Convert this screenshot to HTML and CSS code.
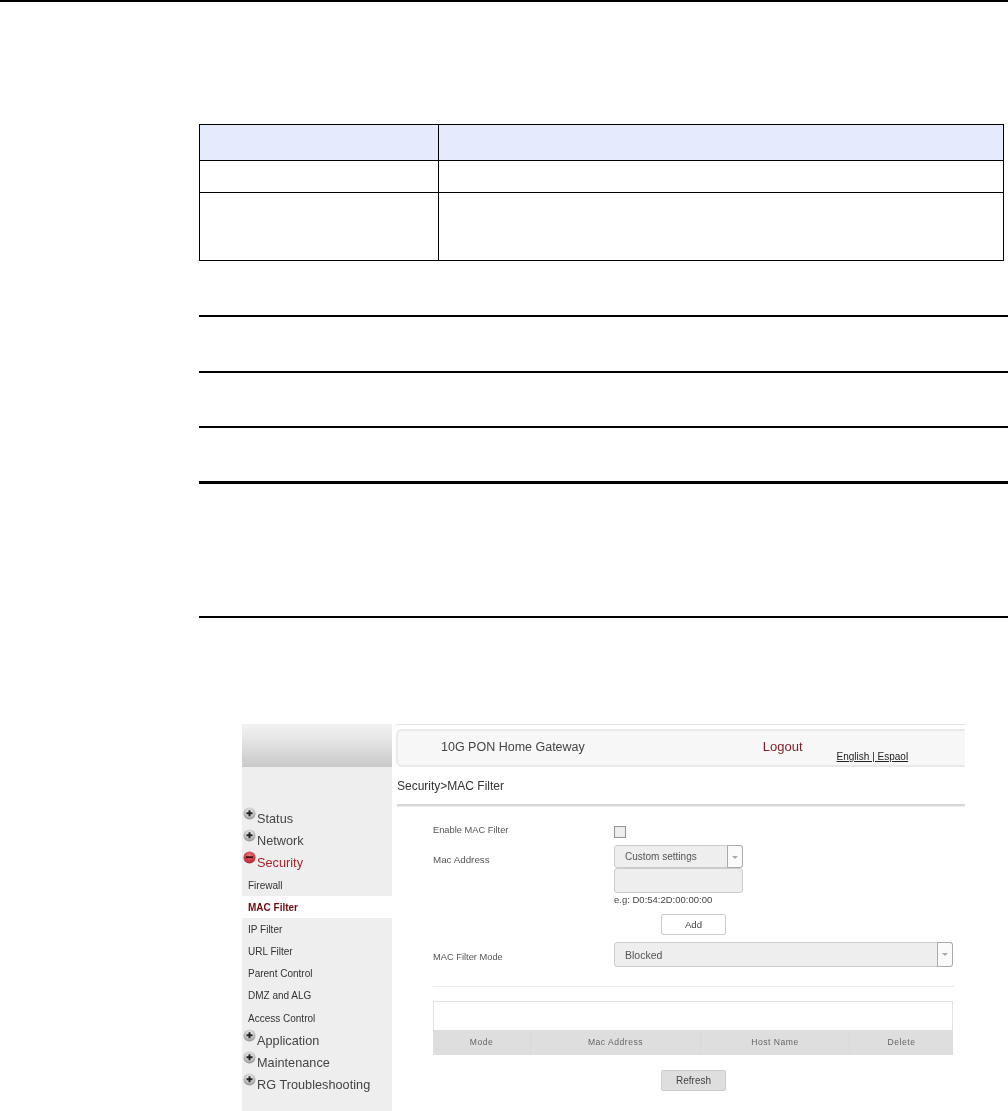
FILE: index.html
```html
<!DOCTYPE html>
<html lang="en">
<head>
<meta charset="utf-8">
<title>MAC Filter</title>
<link rel="stylesheet" href="styles.css">
</head>
<body>
<svg class="defs" width="0" height="0" aria-hidden="true">
  <defs>
    <radialGradient id="gGrey" cx="50%" cy="35%" r="65%">
      <stop offset="0" stop-color="#f4f4f4"/><stop offset=".6" stop-color="#c4c4c4"/><stop offset="1" stop-color="#8f8f8f"/>
    </radialGradient>
    <radialGradient id="gRed" cx="50%" cy="35%" r="65%">
      <stop offset="0" stop-color="#ee7f86"/><stop offset=".6" stop-color="#d33c48"/><stop offset="1" stop-color="#a92733"/>
    </radialGradient>
    <symbol id="plus" viewBox="0 0 13 13">
      <circle cx="6.5" cy="6.5" r="6" fill="url(#gGrey)"/>
      <path d="M6.5 3.2v6M3.5 6.2h6" stroke="#222" stroke-width="2" fill="none"/>
    </symbol>
    <symbol id="minus" viewBox="0 0 13 13">
      <circle cx="6.5" cy="6.5" r="6" fill="url(#gRed)"/>
      <path d="M3 6.2h7" stroke="#4a1016" stroke-width="2" fill="none"/>
    </symbol>
  </defs>
</svg>
<div class="top-rule"></div>
<div class="doc">
  <table class="param-table">
    <tr class="r-head"><th class="c1"></th><th></th></tr>
    <tr class="r-one"><td></td><td></td></tr>
    <tr class="r-two"><td></td><td></td></tr>
  </table>
  <div class="rules">
    <div class="rule rule-a"></div>
    <div class="rule rule-b"></div>
    <div class="rule rule-b"></div>
    <div class="rule rule-c"></div>
    <div class="rule rule-d"></div>
  </div>
</div>
<div class="shot">
  <aside class="side">
    <div class="side-top"></div>
    <nav class="menu">
      <div class="m1"><svg class="ico"><use href="#plus"/></svg>Status</div>
      <div class="m1"><svg class="ico"><use href="#plus"/></svg>Network</div>
      <div class="m1 red"><svg class="ico"><use href="#minus"/></svg>Security</div>
      <div class="m2">Firewall</div>
      <div class="m2 active">MAC Filter</div>
      <div class="m2">IP Filter</div>
      <div class="m2">URL Filter</div>
      <div class="m2">Parent Control</div>
      <div class="m2">DMZ and ALG</div>
      <div class="m2 last">Access Control</div>
      <div class="m1"><svg class="ico"><use href="#plus"/></svg>Application</div>
      <div class="m1"><svg class="ico"><use href="#plus"/></svg>Maintenance</div>
      <div class="m1"><svg class="ico"><use href="#plus"/></svg>RG Troubleshooting</div>
    </nav>
  </aside>
  <main class="main">
    <header class="head">
      <span class="title">10G PON Home Gateway</span>
      <span class="logout">Logout</span>
      <span class="lang">English | Espaol</span>
    </header>
    <div class="crumb">Security&gt;MAC Filter</div>
    <div class="form">
      <div class="row row-enable">
        <span class="label label-enable">Enable MAC Filter</span>
        <span class="check"></span>
      </div>
      <div class="row row-mac">
        <span class="label label-mac">Mac Address</span>
        <div class="controls">
          <div class="select select-short"><span class="sel-text">Custom settings</span><span class="arrow"></span></div>
          <div class="input"></div>
          <div class="hint">e.g: D0:54:2D:00:00:00</div>
          <div class="btn btn-add">Add</div>
        </div>
      </div>
      <div class="row row-mode">
        <span class="label label-mode">MAC Filter Mode</span>
        <div class="select select-long"><span class="sel-text">Blocked</span><span class="arrow"></span></div>
      </div>
      <div class="sep"></div>
      <div class="list">
        <div class="list-blank"></div>
        <div class="list-head">
          <span class="col col-mode">Mode</span>
          <span class="col col-mac">Mac Address</span>
          <span class="col col-host">Host Name</span>
          <span class="col col-del">Delete</span>
        </div>
      </div>
      <div class="btn btn-refresh">Refresh</div>
    </div>
  </main>
</div>
</body>
</html>
```
FILE: styles.css
```css
* { box-sizing: border-box; }
html, body { margin: 0; padding: 0; background: #fff; }
body { height: 1111px; overflow: hidden; font-family: "Liberation Sans", Arial, sans-serif; color: #000; }
.defs { display: block; height: 0; }
.top-rule { height: 2px; background: #000; }

.doc { padding-left: 199px; }
.param-table { margin-top: 122px; width: 805px; height: 137px; border-collapse: collapse; table-layout: fixed; }
.param-table th, .param-table td { border: 1px solid #000; padding: 0; }
.param-table .c1 { width: 239px; }
.r-head { height: 36px; }
.r-head th { background: #e5eafc; }
.r-one { height: 32px; }
.r-two { height: 68px; }

.rules { margin-top: 54px; }
.rule { border-top: 2px solid #000; }
.rule-a { height: 56px; }
.rule-b { height: 55px; }
.rule-c { height: 135px; border-top-width: 3px; }
.rule-d { height: 2px; }

.shot { display: flex; width: 723px; height: 387px; margin: 106px 0 0 242px; overflow: hidden; color: #444; filter: blur(.4px); }

.side { width: 150px; flex: none; background: #eee; }
.side-top { height: 43px; background: linear-gradient(#f1f1f1, #e6e6e6 35%, #c9c9c9); }
.menu { padding-top: 41px; }
.m1 { display: flex; align-items: center; height: 22px; font-size: 12.7px; color: #444; letter-spacing: .02px; }
.m1.red { color: #a5252e; }
.ico { width: 13px; height: 13px; margin: -11px 1px 0 1px; flex: none; }
.m2 { height: 22px; line-height: 24px; padding-left: 6px; font-size: 10px; color: #333; }
.m2.active { background: #fff; color: #6e0d12; font-weight: bold; }
.m2.last { height: 24px; line-height: 26px; }

.main { flex: 1; min-width: 0; padding-left: 5px; background: #fff; }
.head { display: flex; height: 43px; margin-left: -3px; padding: 5px 0 0 2px; border-top: 1px solid #e4e4e4; border-top-left-radius: 5px; position: relative; }
.head::before { content: ""; position: absolute; left: 2px; right: -8px; top: 4px; bottom: 0; background: #f7f7f7; border: 2px solid #e9e9e9; border-radius: 6px 0 0 6px; }
.title, .logout, .lang { position: relative; }
.title { margin: 10px 0 0 45px; font-size: 12.5px; line-height: 14px; color: #444; }
.logout { margin: 9px 0 0 178px; font-size: 13px; line-height: 15px; color: #7a1f26; }
.lang { margin: 21px 0 0 34px; font-size: 10px; line-height: 12px; color: #222; text-decoration: underline; }
.crumb { height: 39px; line-height: 38px; font-size: 12px; color: #333; border-bottom: 2px solid #d6d6d6; box-shadow: 0 1px 0 #eee; }

.form { padding: 17px 12px 0 36px; }
.row { display: flex; align-items: flex-start; }
.label { width: 181px; flex: none; font-size: 9.3px; line-height: 13px; color: #555; }
.row-enable { height: 22px; }
.label-enable { margin-top: 1px; }
.check { width: 12px; height: 12px; margin-top: 3px; background: #eee; border: 1px solid #999; box-shadow: inset 0 0 1px #bbb; }
.row-mac { height: 97px; }
.label-mac { margin-top: 8px; font-size: 9.8px; }
.select { display: flex; align-items: center; justify-content: space-between; background: #eee; border: 1px solid #ccc; border-radius: 3px; font-size: 10.5px; color: #555; }
.sel-text { padding-left: 10px; }
.arrow { position: relative; flex: none; width: 16px; align-self: stretch; background: #fafafa; border: 1px solid #aaa; border-radius: 0 3px 3px 0; margin: -1px -1px -1px 0; }
.arrow::after { content: ""; position: absolute; left: 4px; top: 10px; border: 3px solid transparent; border-top: 3px solid #aaa; }
.controls { width: 129px; }
.select-short { height: 23px; font-size: 10px; }
.input { height: 25px; background: #eee; border: 1px solid #ccc; border-radius: 3px; }
.hint { height: 21px; font-size: 9.5px; line-height: 14px; color: #444; white-space: nowrap; }
.btn { display: flex; align-items: center; justify-content: center; width: 65px; height: 21px; border: 1px solid #ccc; border-radius: 2px; font-size: 9.6px; color: #444; }
.btn-add { margin-left: 47px; background: #fff; }
.row-mode { height: 44px; }
.label-mode { margin-top: 9px; }
.select-long { width: 339px; height: 25px; }
.sep { height: 1px; background: #ececec; width: 521px; }
.list { width: 520px; margin-top: 14px; }
.list-blank { height: 29px; border: 1px solid #e2e2e2; border-bottom: 0; }
.list-head { display: flex; height: 25px; background: #dedede; align-items: center; font-size: 8.6px; letter-spacing: .5px; color: #666; }
.col { text-align: center; border-right: 1px solid #d9d9d9; height: 100%; line-height: 25px; }
.col-mode { width: 98px; }
.col-mac { width: 170px; }
.col-host { width: 149px; }
.col-del { width: 103px; border-right: 0; }
.btn-refresh { margin: 15px 0 0 228px; background: #dedede; font-size: 10px; }
```
